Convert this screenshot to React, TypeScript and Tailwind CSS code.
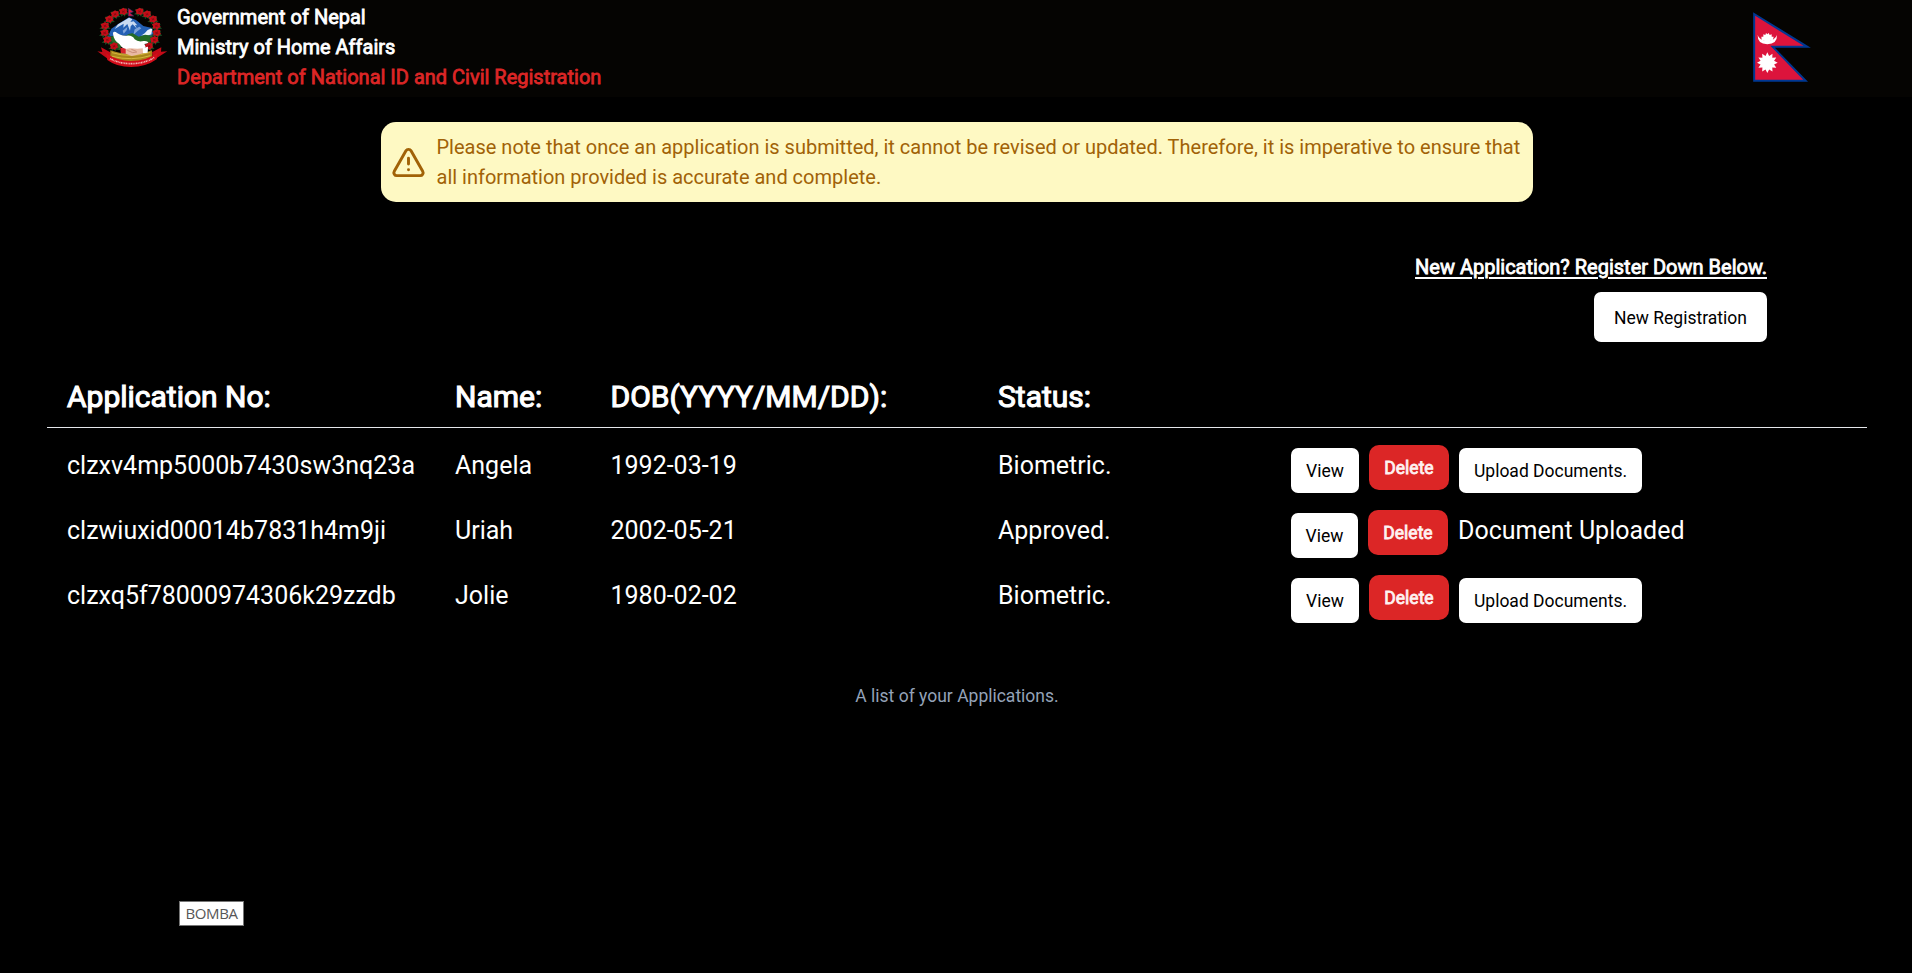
import { TriangleAlert } from "lucide-react";

type Application = {
  id: string;
  name: string;
  dob: string;
  status: string;
  uploaded: boolean;
};

const applications: Application[] = [
  { id: "clzxv4mp5000b7430sw3nq23a", name: "Angela", dob: "1992-03-19", status: "Biometric.", uploaded: false },
  { id: "clzwiuxid00014b7831h4m9ji", name: "Uriah", dob: "2002-05-21", status: "Approved.", uploaded: true },
  { id: "clzxq5f78000974306k29zzdb", name: "Jolie", dob: "1980-02-02", status: "Biometric.", uploaded: false },
];

const flowers: [number, number][] = [
  [130, 34], [105, 42], [88, 57], [75, 77], [74, 98], [82, 119], [102, 138],
  [179, 34], [201, 42], [219, 57], [229, 77], [230, 98], [223, 119], [207, 138],
];

function Flower({ x, y }: { x: number; y: number }) {
  return (
    <g transform={`translate(${x} ${y})`}>
      <path d="M-17 9L-9 2L-14 -6L-4 -8L8 -9L13 -3L10 2L17 9L7 10L4 16L0 10L-6 16L-7 10Z" fill="#174d24" />
      <path d="M0 -11L5 -8L11 -8L10 -1L13 4L7 7L3 12L-3 8L-10 9L-10 2L-13 -4L-6 -7Z" fill="#c50d18" />
      <path d="M-5 -3L0 -1L4 -5L3 1L6 4L0 3L-4 6L-3 1Z" fill="#8a0b12" />
    </g>
  );
}

function Emblem() {
  return (
    <svg viewBox="45 18 222 189" className="h-[63px] w-[74px]" aria-hidden="true">
      <path d="M83 112L94 86L118 70L147 52L168 60L190 78L216 84L222 100L216 112L188 116L150 108L110 106Z" fill="#2460b4" />
      <path d="M147 53L157 58L151 66L161 64L172 76L165 75L171 86L158 73L152 79L150 92L142 72L130 83L131 71L118 79L104 87L114 73L131 63Z" fill="#c9daf1" />
      <path d="M128 92L142 81L140 91L131 101ZM164 88L178 80L184 85L172 94L160 105Z" fill="#7fa4da" />
      <path d="M217 84L203 90L194 100L183 107L195 104L190 112L214 103Z" fill="#eef4fc" />
      <path d="M136 108Q147 99 158 100L176 110L196 104L216 107L222 120L213 136L202 147L176 140Z" fill="#256b26" />
      <path d="M88 110L101 108L114 122L124 136L120 150L104 148L86 130Z" fill="#256b26" />
      <path d="M99 101Q98 94 107 96Q121 108 140 107Q157 105 164 118Q174 127 191 123Q206 122 206 133L202 148L165 147L137 149Q123 142 118 132Q101 121 99 101Z" fill="#fff" />
      {flowers.map(([x, y]) => (
        <Flower key={`${x}-${y}`} x={x} y={y} />
      ))}
      <path d="M145 25L160 35L150 39L161 48H145Z" fill="#dc143c" stroke="#3a3570" strokeWidth="2" />
      <path d="M91 151Q115 160 153 162Q196 160 216 151L218 173Q187 186 155 186Q119 186 90 173Z" fill="#a9851a" />
      <path d="M96 158Q153 175 211 157M96 169Q155 184 211 167" fill="none" stroke="#dcc043" strokeWidth="2.5" />
      <path d="M123 144L137 147L149 145L172 146L190 145V160L173 164L155 168L139 162L123 159Z" fill="#e9b9a2" />
      <path d="M142 151L158 158L171 156M154 148L169 154" fill="none" stroke="#b97863" strokeWidth="2" />
      <path d="M121 143L137 146V161L122 158Z" fill="#d8232a" />
      <path d="M188 144L204 140L203 158L189 160Z" fill="#fff" />
      <path d="M63 142L91 157L89 181L52 154L67 156Z" fill="#c50a17" />
      <path d="M244 142L216 157L220 181L262 154L243 155Z" fill="#c50a17" />
      <path d="M78 160Q112 183 153 183Q199 183 233 158L230 178Q198 201 153 201Q110 201 82 180Z" fill="#d30c19" />
      <path d="M90 176Q119 191 153 191Q193 191 224 172" fill="none" stroke="#f0b0b0" strokeWidth="5" strokeDasharray="3 1.5 5 1.5 2 2" />
    </svg>
  );
}

const rays = Array.from({ length: 24 }, (_, i) => {
  const r = i % 2 === 0 ? 31 : 21;
  const a = (i * Math.PI) / 12 - Math.PI / 2;
  return `${(142 + r * Math.cos(a)).toFixed(1)},${(188 + r * Math.sin(a)).toFixed(1)}`;
}).join(" ");

function NepalFlag() {
  return (
    <svg viewBox="96 33 180 216" className="h-[72px] w-[60px]" aria-hidden="true">
      <path d="M102.500 42L262 140.500H158L257 242.500H102.500Z" fill="#dc143c" stroke="#003893" strokeWidth="6" />
      <path d="M113 105Q118 122 142 122Q165 122 171 105Q172 132 142 133Q112 132 113 105Z" fill="#fff" />
      <path d="M125 119L124 110L130 110L130 103L136 105L138 99L142 103L146 99L149 105L155 103L155 110L161 110L159 119L142 126Z" fill="#fff" />
      <polygon points={rays} fill="#fff" />
    </svg>
  );
}

function WhiteButton({ children, className }: { children: string; className: string }) {
  return (
    <button className={`flex shrink-0 items-center justify-center bg-white pt-0.5 text-black ${className}`}>
      {children}
    </button>
  );
}

export default function App() {
  return (
    <div className="flex h-[973px] w-full flex-col overflow-hidden bg-black font-['Roboto',sans-serif] text-white">
      <header className="flex h-[97px] shrink-0 items-start justify-between bg-[#050402] pr-[100px] pl-[95px]">
        <div className="flex">
          <div className="pt-1.5">
            <Emblem />
          </div>
          <div className="pt-0.5 pl-2 text-[20px] leading-[30px] [-webkit-text-stroke:0.8px_currentColor]">
            <p>Government of Nepal</p>
            <p>Ministry of Home Affairs</p>
            <p className="text-[#dc2626]">Department of National ID and Civil Registration</p>
          </div>
        </div>
        <div className="pt-[11px]">
          <NepalFlag />
        </div>
      </header>

      <div className="mt-[25px] ml-[381px] flex h-20 w-[1152px] shrink-0 items-center rounded-[15px] bg-[#fef9c3] pl-2.5 text-[#a16207]">
        <TriangleAlert className="h-[35px] w-[35px] shrink-0" strokeWidth={2} />
        <p className="ml-[10.500px] text-[20px] leading-[30px] whitespace-nowrap">
          Please note that once an application is submitted, it cannot be revised or updated. Therefore, it is imperative to ensure that
          <br />
          all information provided is accurate and complete.
        </p>
      </div>

      <div className="mt-[50px] flex shrink-0 flex-col items-end pr-[145px]">
        <p className="text-[20px] leading-[30px] underline decoration-2 underline-offset-[3px] [-webkit-text-stroke:0.8px_currentColor]">
          New Application? Register Down Below.
        </p>
        <WhiteButton className="mt-2.5 h-[50px] w-[173px] rounded-[7px] text-[17.5px]">New Registration</WhiteButton>
      </div>

      <main className="mt-[25px] ml-[47px] w-[1820px] shrink-0">
        <div className="grid h-[61px] grid-cols-[388px_155.5px_387.5px_293px_1fr] items-center border-b border-gray-200 pb-0.5 pl-5 text-[30px] [-webkit-text-stroke:1.1px_currentColor]">
          <span>Application No:</span>
          <span>Name:</span>
          <span>DOB(YYYY/MM/DD):</span>
          <span>Status:</span>
        </div>
        {applications.map((a) => (
          <div
            key={a.id}
            className="grid h-[65px] grid-cols-[388px_155.5px_387.5px_293px_1fr] items-start pl-5 text-[25px] leading-[35px]"
          >
            <span className="pt-5">{a.id}</span>
            <span className="pt-5">{a.name}</span>
            <span className="pt-5">{a.dob}</span>
            <span className="pt-5">{a.status}</span>
            <div className="flex items-start pt-[17px]">
              <WhiteButton
                className={
                  a.uploaded
                    ? "mt-[3px] h-[45px] w-[67px] rounded-[7px] text-[17.5px]"
                    : "mt-[3px] h-[45px] w-[68px] rounded-[7px] text-[17.5px]"
                }
              >
                View
              </WhiteButton>
              <button className="ml-2.5 flex h-[45px] w-20 shrink-0 items-center justify-center rounded-[10px] bg-[#dc2626] pt-0.5 text-[17.5px] text-red-50 [-webkit-text-stroke:0.8px_currentColor]">
                Delete
              </button>
              {a.uploaded ? (
                <span className="ml-2.5 pt-[3px] whitespace-nowrap">Document Uploaded</span>
              ) : (
                <WhiteButton className="mt-[3px] ml-2.5 h-[45px] w-[183px] rounded-[7px] text-[17.5px]">
                  Upload Documents.
                </WhiteButton>
              )}
            </div>
          </div>
        ))}
        <p className="mt-[61px] text-center text-[17.5px] leading-[25px] text-[#94a3b8]">A list of your Applications.</p>
      </main>

      <div className="mt-48 ml-[179px] flex h-[25px] w-[65px] shrink-0 items-center justify-center border border-[#767676] bg-white font-['Open_Sans',sans-serif] text-[15px] tracking-[-0.4px] text-[#575757]">
        BOMBA
      </div>
    </div>
  );
}
